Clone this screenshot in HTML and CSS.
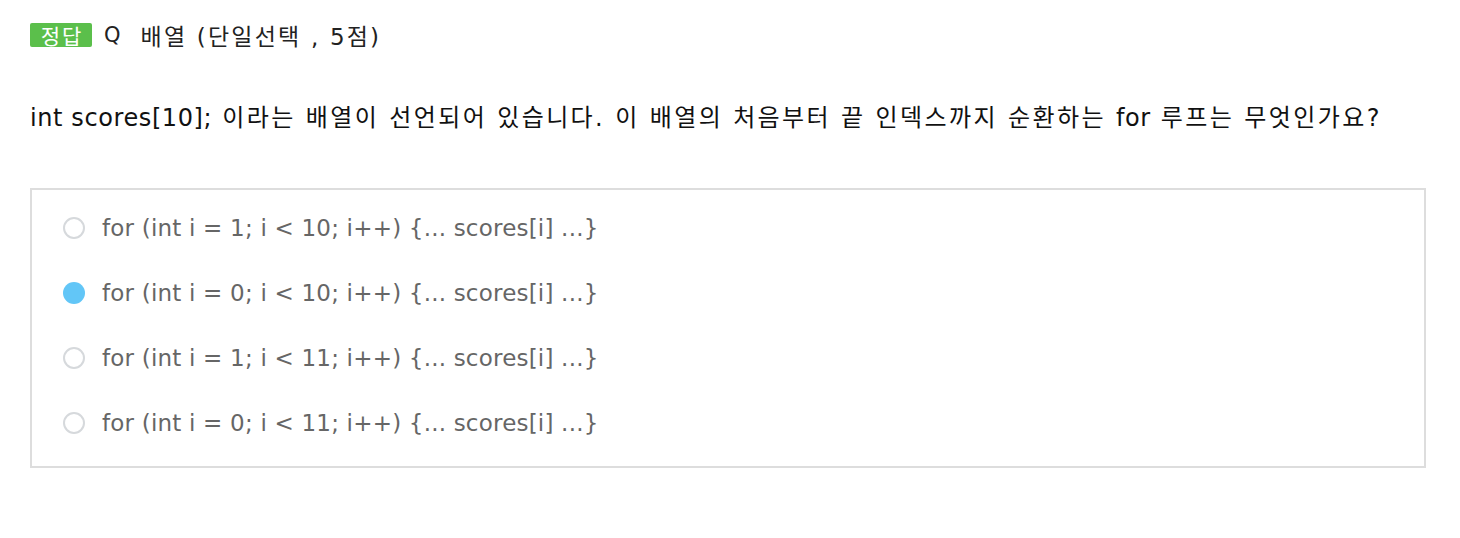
FILE: index.html
```html
<!DOCTYPE html>
<html lang="ko">
    <head>
        <meta charset="UTF-8" />
        <meta name="viewport" content="width=device-width, initial-scale=1.0" />
        <link rel="stylesheet" href="styles.css">
        <title>Quiz</title>
    </head>
    <body>
        <div class="quiz">
            <div class="quiz__head">
                <span class="badge">정답</span>
                <span class="quiz__q">Q</span>
                <span class="quiz__title">배열 (단일선택 , 5점)</span>
            </div>

            <p class="quiz__text"><span class="code">int scores[10];</span> 이라는 배열이 선언되어 있습니다. 이 배열의 처음부터 끝 인덱스까지 순환하는 <span class="code">for</span> 루프는 무엇인가요?</p>

            <ul class="choices">
                <li class="choice">
                    <span class="radio"></span>
                    <span class="choice__label">for (int i = 1; i &lt; 10; i++) {... scores[i] ...}</span>
                </li>
                <li class="choice">
                    <span class="radio radio--checked"></span>
                    <span class="choice__label">for (int i = 0; i &lt; 10; i++) {... scores[i] ...}</span>
                </li>
                <li class="choice">
                    <span class="radio"></span>
                    <span class="choice__label">for (int i = 1; i &lt; 11; i++) {... scores[i] ...}</span>
                </li>
                <li class="choice">
                    <span class="radio"></span>
                    <span class="choice__label">for (int i = 0; i &lt; 11; i++) {... scores[i] ...}</span>
                </li>
            </ul>
        </div>
    </body>
</html>
```

FILE: styles.css
```css
*,
*::before,
*::after {
    box-sizing: border-box;
}

body,
p,
ul {
    margin: 0;
    padding: 0;
}

body {
    background: #fff;
    color: #222;
    font-family: 'DejaVu Sans', 'Noto Sans CJK KR', sans-serif;
}

.quiz {
    padding: 20px 34px 0 30px;
}

.quiz__head {
    display: flex;
    align-items: center;
    height: 30px;
}

.badge {
    display: flex;
    align-items: center;
    justify-content: center;
    width: 62px;
    height: 24px;
    padding-left: 2px;
    background: #5bbf4b;
    border-radius: 2px;
    color: #fff;
    font-family: 'Noto Sans CJK KR', sans-serif;
    font-size: 21px;
    letter-spacing: 2px;
    line-height: 1;
}

.quiz__q {
    margin-left: 12px;
    font-size: 21px;
    color: #222;
}

.quiz__title {
    margin-left: 20px;
    font-size: 23px;
    letter-spacing: 2.2px;
    color: #222;
}

.quiz__text {
    margin-top: 48px;
    font-size: 24px;
    line-height: 40px;
    letter-spacing: 2.4px;
    color: #111;
}

.quiz__text .code {
    letter-spacing: 0.6px;
}

.choices {
    list-style: none;
    margin-top: 50px;
    border: 2px solid #ddd;
    padding: 5px 0 11px 31px;
}

.choice {
    display: flex;
    align-items: center;
    height: 65px;
}

.radio {
    width: 22px;
    height: 22px;
    border: 2px solid #d6d9dc;
    border-radius: 50%;
}

.radio--checked {
    border: none;
    background: #62c6f7;
}

.choice__label {
    margin-left: 17px;
    font-size: 23px;
    letter-spacing: 0.2px;
    color: #666;
}
```
